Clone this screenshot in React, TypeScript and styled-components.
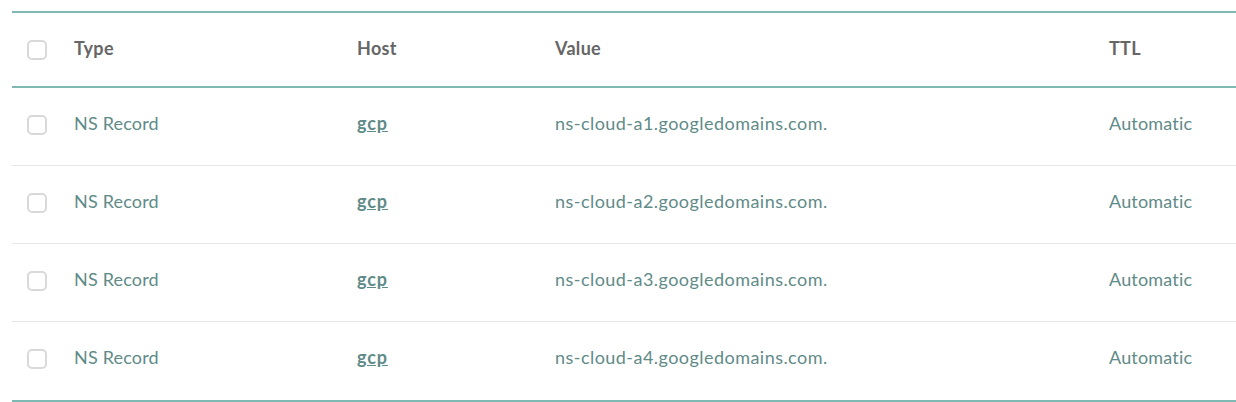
import React from "react";
import styled, { createGlobalStyle } from "styled-components";

const Global = createGlobalStyle`
  html, body { margin: 0; padding: 0; background: #fff; overflow: hidden; }
  body { font-family: "Lato", "Open Sans", sans-serif; }
`;

const Table = styled.div`
  margin: 11px 0 0 12px;
  width: 1224px;
  border-top: 2px solid #7fb9b3;
  border-bottom: 2px solid #7fb9b3;
`;

const Row = styled.div<{ $head?: boolean }>`
  display: grid;
  grid-template-columns: 62px 283px 198px 554px 127px;
  align-items: center;
  box-sizing: border-box;
  height: ${(p) => (p.$head ? "75px" : "78px")};
  padding-bottom: ${(p) => (p.$head ? "0" : "3px")};
  border-bottom: ${(p) => (p.$head ? "2px solid #7fb9b3" : "1px solid #e6e6e6")};
  &:last-child { border-bottom-color: transparent; }
`;

const CheckCell = styled.div`
  padding-left: 15px;
  display: flex;
`;

const Check = styled.span`
  display: block;
  box-sizing: border-box;
  width: 20px;
  height: 20px;
  border: 2px solid #d9d9d9;
  border-radius: 5px;
  background: #fff;
`;

const HeadCell = styled.div`
  font-size: 18px;
  font-weight: 700;
  color: #666666;
  letter-spacing: 0.3px;
  padding-bottom: 4px;
`;

const Cell = styled.div<{ $wide?: boolean }>`
  font-size: 18px;
  color: #5f8b88;
  letter-spacing: ${(p) => (p.$wide ? "0.46px" : "0.18px")};
  padding-bottom: 4px;
`;

const HostCell = styled.div`
  padding-bottom: 4px;
`;

const HostLink = styled.a`
  font-size: 18px;
  font-weight: 700;
  color: #5f8b88;
  letter-spacing: 0.9px;
  text-decoration: underline;
`;

const values = ["a1", "a2", "a3", "a4"];

export default function App() {
  return (
    <>
      <Global />
      <Table>
        <Row $head>
          <CheckCell><Check /></CheckCell>
          <HeadCell>Type</HeadCell>
          <HeadCell>Host</HeadCell>
          <HeadCell>Value</HeadCell>
          <HeadCell>TTL</HeadCell>
        </Row>
        {values.map((v) => (
          <Row key={v}>
            <CheckCell><Check /></CheckCell>
            <Cell>NS Record</Cell>
            <HostCell><HostLink>gcp</HostLink></HostCell>
            <Cell $wide>{`ns-cloud-${v}.googledomains.com.`}</Cell>
            <Cell>Automatic</Cell>
          </Row>
        ))}
      </Table>
    </>
  );
}
